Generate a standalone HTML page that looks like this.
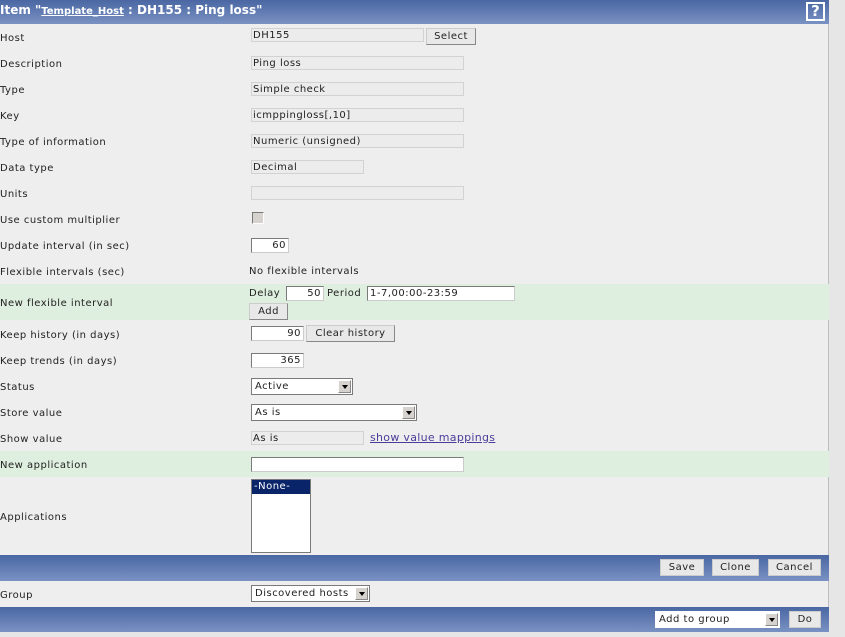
<!DOCTYPE html>
<html><head><style>
*{margin:0;padding:0;box-sizing:border-box}
body{width:845px;height:637px;background:#e6e6e6;font-family:"DejaVu Sans",Verdana,sans-serif;font-size:10px;color:#222;position:relative;overflow:hidden;letter-spacing:0.5px}
#main{position:absolute;left:0;top:0;width:829px;height:632px;background:#eeeeee;border-right:1px solid #bdbdbd}
.bar{position:absolute;left:0;width:829px;background:linear-gradient(#4a67a3,#7a92c3)}
.a{position:absolute;white-space:nowrap}
.lab{position:absolute;left:0;white-space:nowrap}
.ro{position:absolute;background:#ececec;border:1px solid #d2d2d2;height:14px;padding:0 1px;line-height:14px;white-space:nowrap}
.in{position:absolute;background:#fff;border:1px solid #7a7a7a;border-right-color:#ccc;border-bottom-color:#ccc;height:15px;line-height:14px;padding:0 2px;white-space:nowrap}
.btn{position:absolute;background:#e8e8e8;border:1px solid #888;border-top-color:#ccc;border-left-color:#ccc;height:17px;line-height:16px;text-align:center}
.green{position:absolute;left:0;width:829px;background:#dfefdf}
.sel{position:absolute;background:#fff;border:1px solid #7a7a7a;height:17px;line-height:16px;padding-left:3px;white-space:nowrap}
.sel i{position:absolute;right:1px;top:1px;width:13px;height:13px;background:#d6d3ce;border:1px solid #888;border-top-color:#fff;border-left-color:#fff}
.sel i:after{content:"";position:absolute;left:3px;top:4px;border:3px solid transparent;border-top:4px solid #000}
</style></head><body>
<div id="main">
<div class="bar" style="top:0;height:24px"></div>
<div class="a" style="left:0;top:3px;color:#fff;font-weight:bold;font-size:12px;letter-spacing:0">Item "<span style="text-decoration:underline;font-size:10px">Template_Host</span> : DH155 : Ping loss"</div>
<div class="a" style="left:806px;top:2px;width:19px;height:19px;border:2px solid #fff;color:#fff;font-weight:bold;font-size:15px;text-align:center;line-height:15px;letter-spacing:0">?</div>

<div class="green" style="top:284px;height:36px"></div>
<div class="green" style="top:451px;height:26px"></div>

<div class="lab" style="top:33px">Host</div>
<div class="lab" style="top:59px">Description</div>
<div class="lab" style="top:85px">Type</div>
<div class="lab" style="top:111px">Key</div>
<div class="lab" style="top:137px">Type of information</div>
<div class="lab" style="top:163px">Data type</div>
<div class="lab" style="top:189px">Units</div>
<div class="lab" style="top:215px">Use custom multiplier</div>
<div class="lab" style="top:241px">Update interval (in sec)</div>
<div class="lab" style="top:267px">Flexible intervals (sec)</div>
<div class="lab" style="top:298px">New flexible interval</div>
<div class="lab" style="top:330px">Keep history (in days)</div>
<div class="lab" style="top:356px">Keep trends (in days)</div>
<div class="lab" style="top:382px">Status</div>
<div class="lab" style="top:408px">Store value</div>
<div class="lab" style="top:434px">Show value</div>
<div class="lab" style="top:460px">New application</div>
<div class="lab" style="top:512px">Applications</div>
<div class="lab" style="top:590px">Group</div>

<div class="ro" style="left:251px;top:28px;width:173px">DH155</div>
<div class="btn" style="left:426px;top:28px;width:50px">Select</div>
<div class="ro" style="left:251px;top:56px;width:213px">Ping loss</div>
<div class="ro" style="left:251px;top:82px;width:213px">Simple check</div>
<div class="ro" style="left:251px;top:108px;width:213px">icmppingloss[,10]</div>
<div class="ro" style="left:251px;top:134px;width:213px">Numeric (unsigned)</div>
<div class="ro" style="left:251px;top:160px;width:113px">Decimal</div>
<div class="ro" style="left:251px;top:186px;width:213px"></div>
<div class="a" style="left:252px;top:212px;width:12px;height:12px;background:#d6d3ce;border:1px solid #fff;border-top-color:#777;border-left-color:#777"></div>
<div class="in" style="left:251px;top:238px;width:38px;text-align:right">60</div>
<div class="a" style="left:249px;top:266px">No flexible intervals</div>
<div class="a" style="left:249px;top:288px">Delay</div>
<div class="in" style="left:286px;top:286px;width:38px;text-align:right">50</div>
<div class="a" style="left:327px;top:288px">Period</div>
<div class="in" style="left:367px;top:286px;width:148px">1-7,00:00-23:59</div>
<div class="btn" style="left:249px;top:303px;width:39px">Add</div>
<div class="in" style="left:251px;top:326px;width:53px;text-align:right">90</div>
<div class="btn" style="left:306px;top:325px;width:89px">Clear history</div>
<div class="in" style="left:251px;top:353px;width:53px;text-align:right">365</div>
<div class="sel" style="left:251px;top:378px;width:102px">Active<i></i></div>
<div class="sel" style="left:251px;top:404px;width:166px">As is<i></i></div>
<div class="ro" style="left:251px;top:431px;width:113px">As is</div>
<div class="a" style="left:370px;top:431px;color:#4a3d9a;text-decoration:underline;font-size:11px;letter-spacing:0.3px">show value mappings</div>
<div class="in" style="left:251px;top:457px;width:213px"></div>
<div class="a" style="left:251px;top:479px;width:60px;height:74px;background:#fff;border:1px solid #7a7a7a"><div style="background:#0a246a;color:#fff;padding-left:2px;height:14px;line-height:14px">-None-</div></div>

<div class="bar" style="top:555px;height:26px"></div>
<div class="btn" style="left:660px;top:559px;width:44px;border-color:#ccc">Save</div>
<div class="btn" style="left:712px;top:559px;width:47px;border-color:#ccc">Clone</div>
<div class="btn" style="left:768px;top:559px;width:53px;border-color:#ccc">Cancel</div>
<div class="sel" style="left:251px;top:585px;width:119px">Discovered hosts<i></i></div>
<div class="bar" style="top:607px;height:25px"></div>
<div class="sel" style="left:655px;top:611px;width:125px;border-color:#fff">Add to group<i></i></div>
<div class="btn" style="left:789px;top:611px;width:32px;border-color:#ccc">Do</div>
</div>
</body></html>
